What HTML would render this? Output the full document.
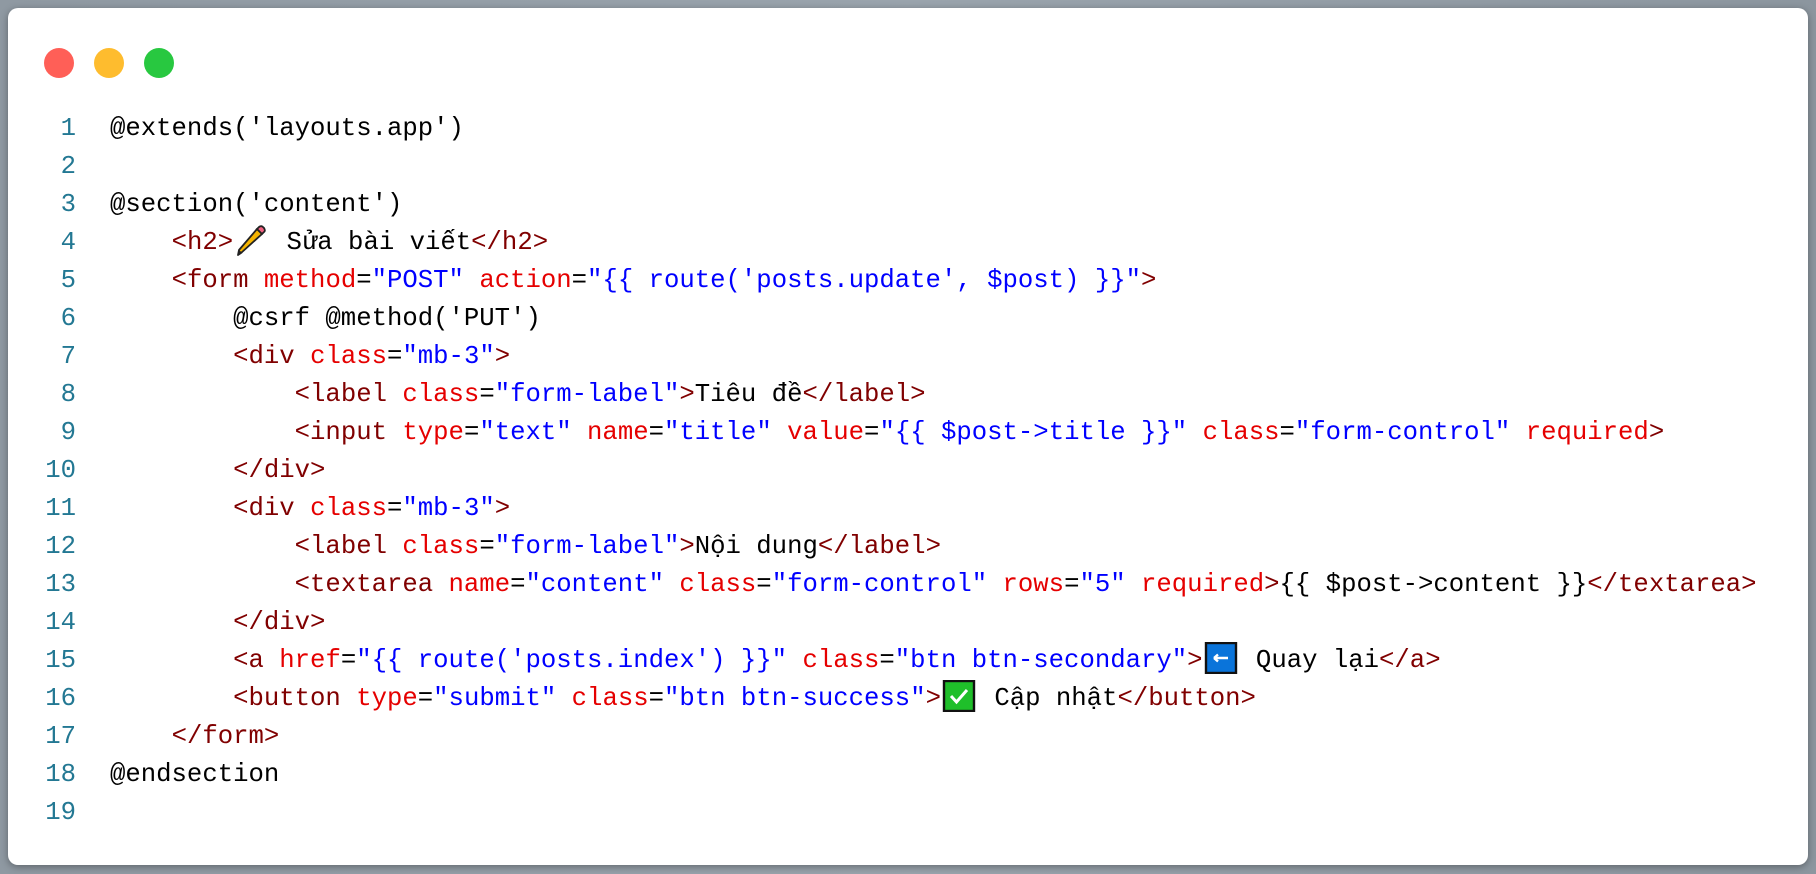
<!DOCTYPE html>
<html><head><meta charset="utf-8">
<style>
html,body{margin:0;padding:0;width:1816px;height:874px;overflow:hidden;background:linear-gradient(90deg,#8f99a2,#9aa4ad 50%,#8c969f);}
.card{position:absolute;left:8px;top:8px;width:1800px;height:857px;background:#fff;border-radius:10px;box-shadow:0 2px 8px rgba(0,0,0,.35);}
.dot{position:absolute;top:40px;width:30px;height:30px;border-radius:50%;}
pre{position:absolute;left:0;top:102px;margin:0;font-family:"Liberation Mono","DejaVu Sans Mono",monospace;font-size:25.65px;line-height:38px;color:#000;}
.n{display:inline-block;width:68px;text-align:right;color:#237893;margin-right:34px;}
.t{color:#800000}.a{color:#e50000}.s{color:#0000ff}
.e{display:inline-block;width:36px;height:32px;vertical-align:-7px;margin-right:2px;}
</style></head><body>
<div class="card">
<div class="dot" style="left:36px;background:#ff5f57"></div>
<div class="dot" style="left:86px;background:#febc2e"></div>
<div class="dot" style="left:136px;background:#28c840"></div>
<pre><span class="n">1</span>@extends('layouts.app')
<span class="n">2</span>
<span class="n">3</span>@section('content')
<span class="n">4</span>    <span class="t">&lt;h2&gt;</span><svg class="e" viewBox="0 0 32 32"><path d="M6 29 L3 31 L4 26 L22 5 L27 10 Z" fill="#f5b400" stroke="#222" stroke-width="1.8" stroke-linejoin="round"/><path d="M22 5 L24 3 Q26.5 1 28.5 3.5 L29 4 Q31 7 28.5 8.5 L27 10 Z" fill="#f06080" stroke="#222" stroke-width="1.8"/><path d="M3 31 L4 26 L7.5 29 Z" fill="#222"/></svg> Sửa bài viết<span class="t">&lt;/h2&gt;</span>
<span class="n">5</span>    <span class="t">&lt;form</span> <span class="a">method</span>=<span class="s">"POST"</span> <span class="a">action</span>=<span class="s">"{{ route('posts.update', $post) }}"</span><span class="t">&gt;</span>
<span class="n">6</span>        @csrf @method('PUT')
<span class="n">7</span>        <span class="t">&lt;div</span> <span class="a">class</span>=<span class="s">"mb-3"</span><span class="t">&gt;</span>
<span class="n">8</span>            <span class="t">&lt;label</span> <span class="a">class</span>=<span class="s">"form-label"</span><span class="t">&gt;</span>Tiêu đề<span class="t">&lt;/label&gt;</span>
<span class="n">9</span>            <span class="t">&lt;input</span> <span class="a">type</span>=<span class="s">"text"</span> <span class="a">name</span>=<span class="s">"title"</span> <span class="a">value</span>=<span class="s">"{{ $post-&gt;title }}"</span> <span class="a">class</span>=<span class="s">"form-control"</span> <span class="a">required</span><span class="t">&gt;</span>
<span class="n">10</span>        <span class="t">&lt;/div&gt;</span>
<span class="n">11</span>        <span class="t">&lt;div</span> <span class="a">class</span>=<span class="s">"mb-3"</span><span class="t">&gt;</span>
<span class="n">12</span>            <span class="t">&lt;label</span> <span class="a">class</span>=<span class="s">"form-label"</span><span class="t">&gt;</span>Nội dung<span class="t">&lt;/label&gt;</span>
<span class="n">13</span>            <span class="t">&lt;textarea</span> <span class="a">name</span>=<span class="s">"content"</span> <span class="a">class</span>=<span class="s">"form-control"</span> <span class="a">rows</span>=<span class="s">"5"</span> <span class="a">required</span><span class="t">&gt;</span>{{ $post-&gt;content }}<span class="t">&lt;/textarea&gt;</span>
<span class="n">14</span>        <span class="t">&lt;/div&gt;</span>
<span class="n">15</span>        <span class="t">&lt;a</span> <span class="a">href</span>=<span class="s">"{{ route('posts.index') }}"</span> <span class="a">class</span>=<span class="s">"btn btn-secondary"</span><span class="t">&gt;</span><svg class="e" viewBox="0 0 36 32"><rect x="3" y="1" width="30" height="30" fill="#0a74da" stroke="#111" stroke-width="2.4"/><path d="M11 16 H25 M11 16 L15 12.5 M11 16 L15 19.5" stroke="#fff" stroke-width="2.4" fill="none"/></svg> Quay lại<span class="t">&lt;/a&gt;</span>
<span class="n">16</span>        <span class="t">&lt;button</span> <span class="a">type</span>=<span class="s">"submit"</span> <span class="a">class</span>=<span class="s">"btn btn-success"</span><span class="t">&gt;</span><svg class="e" viewBox="0 0 36 32"><rect x="3" y="1" width="30" height="30" fill="#1fbf2a" stroke="#111" stroke-width="2.4"/><path d="M10 16 L15.5 22 L26 10" stroke="#fff" stroke-width="3" fill="none"/></svg> Cập nhật<span class="t">&lt;/button&gt;</span>
<span class="n">17</span>    <span class="t">&lt;/form&gt;</span>
<span class="n">18</span>@endsection
<span class="n">19</span></pre>
</div>
</body></html>
